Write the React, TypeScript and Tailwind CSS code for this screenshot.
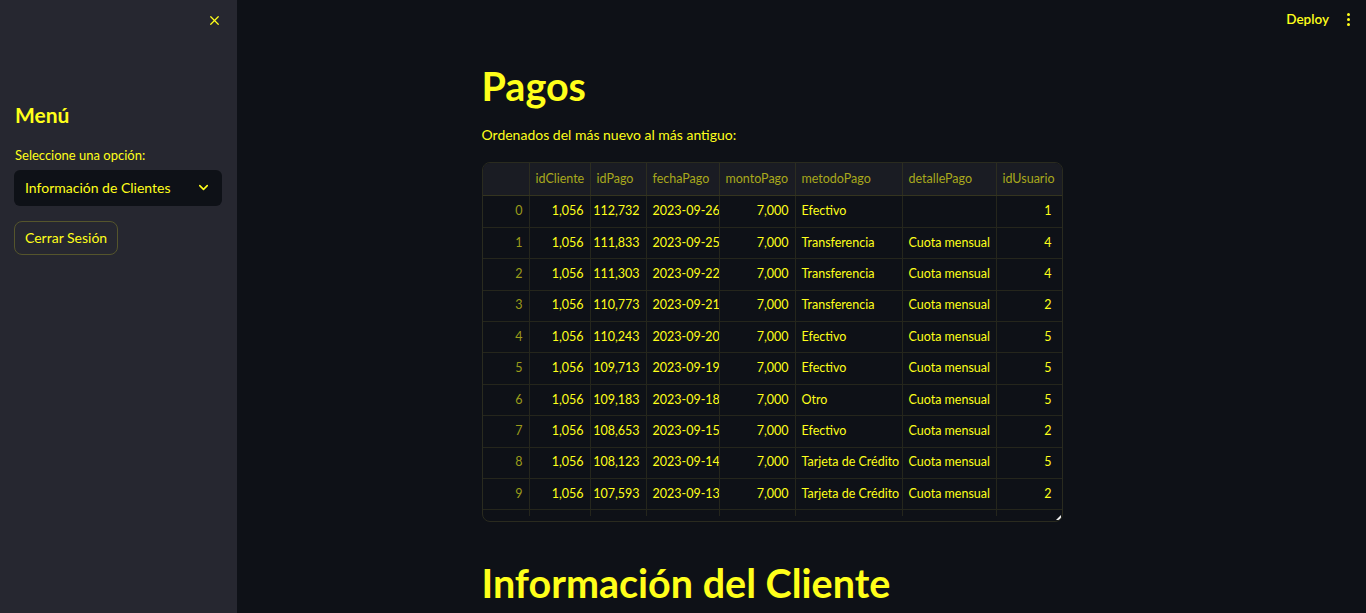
import { X, ChevronDown } from 'lucide-react';

const rows = [
  ['1,056', '112,732', '2023-09-26', '7,000', 'Efectivo', '', '1'],
  ['1,056', '111,833', '2023-09-25', '7,000', 'Transferencia', 'Cuota mensual', '4'],
  ['1,056', '111,303', '2023-09-22', '7,000', 'Transferencia', 'Cuota mensual', '4'],
  ['1,056', '110,773', '2023-09-21', '7,000', 'Transferencia', 'Cuota mensual', '2'],
  ['1,056', '110,243', '2023-09-20', '7,000', 'Efectivo', 'Cuota mensual', '5'],
  ['1,056', '109,713', '2023-09-19', '7,000', 'Efectivo', 'Cuota mensual', '5'],
  ['1,056', '109,183', '2023-09-18', '7,000', 'Otro', 'Cuota mensual', '5'],
  ['1,056', '108,653', '2023-09-15', '7,000', 'Efectivo', 'Cuota mensual', '2'],
  ['1,056', '108,123', '2023-09-14', '7,000', 'Tarjeta de Crédito', 'Cuota mensual', '5'],
  ['1,056', '107,593', '2023-09-13', '7,000', 'Tarjeta de Crédito', 'Cuota mensual', '2'],
];

// column widths in px, index column first
const cols = [
  { name: '', w: 'w-[47px]', right: true },
  { name: 'idCliente', w: 'w-[61px]', right: true },
  { name: 'idPago', w: 'w-[56px]', right: true },
  { name: 'fechaPago', w: 'w-[73px]', right: false },
  { name: 'montoPago', w: 'w-[76px]', right: true },
  { name: 'metodoPago', w: 'w-[107px]', right: false },
  { name: 'detallePago', w: 'w-[94px]', right: false },
  { name: 'idUsuario', w: 'w-[61px]', right: true },
];

function DataTable() {
  return (
    <div className="relative w-[581px] h-[360px] rounded-lg border border-[#2a2b1f] overflow-hidden text-[12.5px] whitespace-nowrap">
      {/* Header */}
      <div className="flex h-[33px] bg-[#1a1c23] border-b border-[#34341f]">
        {cols.map((c, i) => (
          <div
            key={i}
            className={`${c.w} shrink-0 flex items-center px-[6px] overflow-hidden text-[#a8a81c] ${i < cols.length - 1 ? 'border-r border-[#2c2d20]' : ''}`}
          >
            {c.name}
          </div>
        ))}
      </div>

      {/* Rows */}
      {rows.map((r, ri) => (
        <div key={ri} className="flex h-[31.4px] border-b border-[#25261c]">
          {cols.map((c, ci) => (
            <div
              key={ci}
              className={`${c.w} shrink-0 flex items-center px-[6px] overflow-hidden ${c.right ? 'justify-end' : ''} ${ci === 0 ? 'text-[#9c9c1a]' : 'text-[#ffff1a]'} ${ci < cols.length - 1 ? 'border-r border-[#25261c]' : ''}`}
            >
              {ci === 0 ? ri : r[ci - 1]}
            </div>
          ))}
        </div>
      ))}

      {/* partial row */}
      <div className="flex h-[6px]">
        {cols.map((c, ci) => (
          <div key={ci} className={`${c.w} shrink-0 ${ci < cols.length - 1 ? 'border-r border-[#25261c]' : ''}`} />
        ))}
      </div>

      {/* resize handle */}
      <div className="absolute right-[1px] bottom-[1px] w-0 h-0 border-l-[5px] border-l-transparent border-b-[5px] border-b-[#f0f0f0]" />
    </div>
  );
}

export default function App() {
  return (
    <div className="flex h-[613px] w-[1366px] overflow-hidden bg-[#0e1117] text-[#ffff1a]" style={{ fontFamily: 'Lato, "Noto Sans", sans-serif' }}>
      {/* Sidebar */}
      <aside className="w-[237px] shrink-0 bg-[#262730] px-[14px]">
        <div className="flex justify-end pt-[13px] pr-[1px]">
          <X className="w-[15px] h-[15px] text-[#ffff1a]" strokeWidth={2} />
        </div>
        <h2 className="mt-[76px] text-[21px] font-bold leading-none ml-[1px]">Menú</h2>
        <p className="mt-[21px] text-[13px] ml-[1px]">Seleccione una opción:</p>
        <div className="mt-[4px] h-[36px] w-[208px] rounded-md bg-[#0e1117] flex items-center justify-between pl-[11px] pr-[11px] text-[14px]">
          <span>Información de Clientes</span>
          <ChevronDown className="w-[15px] h-[15px]" strokeWidth={2.5} />
        </div>
        <button className="mt-[15px] h-[34px] px-[10px] rounded-lg border border-[#55552c] bg-[#262730] text-[14px] text-[#ffff1a]">
          Cerrar Sesión
        </button>
      </aside>

      {/* Main */}
      <main className="flex-1 flex flex-col">
        <header className="h-[38px] flex items-center justify-end pr-[16px] gap-[18px]">
          <span className="text-[13.5px] font-semibold">Deploy</span>
          <div className="flex flex-col gap-[2px] items-center">
            <span className="w-[3px] h-[3px] rounded-full bg-[#ffff1a]" />
            <span className="w-[3px] h-[3px] rounded-full bg-[#ffff1a]" />
            <span className="w-[3px] h-[3px] rounded-full bg-[#ffff1a]" />
          </div>
        </header>

        <div className="w-[640px] mx-auto">
          <h1 className="mt-[24px] text-[39.5px] font-bold leading-[1.2]">Pagos</h1>
          <p className="mt-[15px] text-[14px]">Ordenados del más nuevo al más antiguo:</p>
          <div className="mt-[17px]">
            <DataTable />
          </div>
          <h1 className="mt-[37px] text-[39.5px] font-bold leading-[1.2]">Información del Cliente</h1>
        </div>
      </main>
    </div>
  );
}
